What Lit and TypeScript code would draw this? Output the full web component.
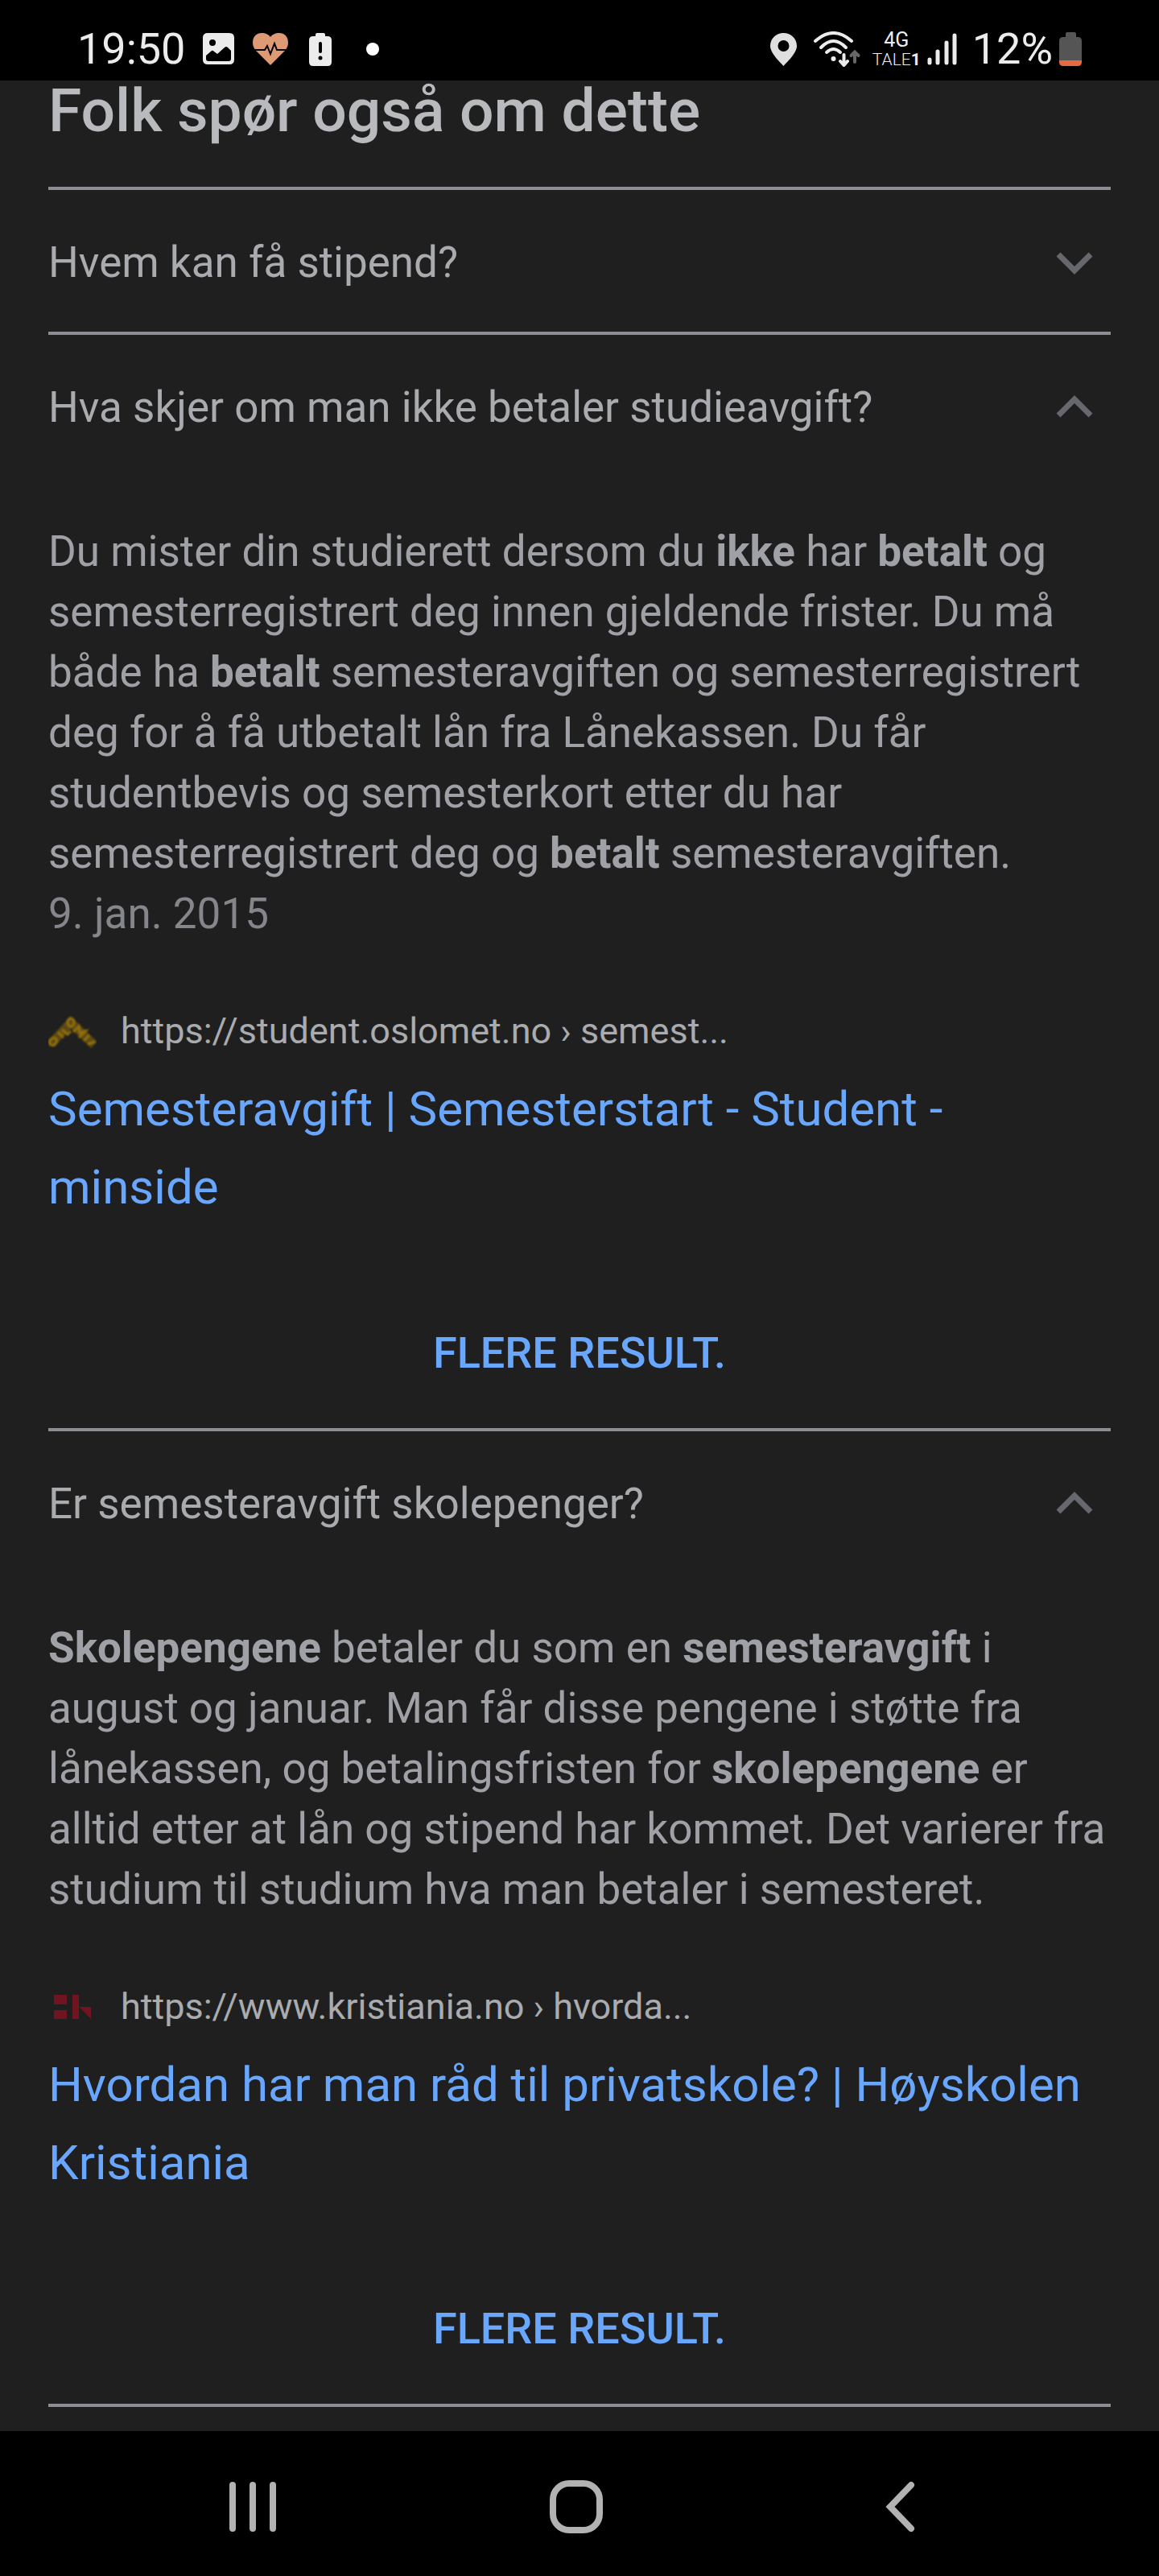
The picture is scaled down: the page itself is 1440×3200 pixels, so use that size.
import { LitElement, html, css } from "lit";
import { customElement, property, state } from "lit/decorators.js";

interface Source {
  icon: unknown;
  url: string;
  title: string;
}

interface Question {
  id: string;
  title: string;
  open: boolean;
  answer?: unknown;
  date?: string;
  source?: Source;
}

const oslometIcon = html`<svg class="favicon" viewBox="0 0 60 60" aria-hidden="true">
  <defs><filter id="soft"><feGaussianBlur stdDeviation="1" /></filter></defs>
  <g filter="url(#soft)" fill="none">
    <path stroke="#5c4812" stroke-width="11" d="M3 46L28 19L57 47" />
    <g stroke="#92700f" stroke-width="3">
      <ellipse cx="6" cy="43" rx="5" ry="4" transform="rotate(-45 6 43)" />
      <path d="M12 31L19 38M17 28L24 34L28 30" />
      <ellipse cx="28" cy="19" rx="4" ry="5" />
      <path d="M31 31L38 24L39 32L46 30L38 38M44 42L51 35M49 46L58 43" />
    </g>
  </g>
</svg>`;

const kristianiaIcon = html`<svg class="favicon" viewBox="0 0 60 60" aria-hidden="true">
  <g fill="#701420">
    <rect x="7" y="15" width="16" height="12" /><rect x="7" y="34" width="16" height="11" />
    <rect x="30" y="15" width="8" height="30" /><path d="M38 30H53V45Z" />
  </g>
</svg>`;

@customElement("status-bar")
class StatusBar extends LitElement {
  static styles = css`
    :host { display: block; background: #000; color: #ececec; font: 400 54px/64px Roboto, "Liberation Sans", sans-serif; }
    .bar { display: flex; align-items: center; justify-content: space-between; height: 100px; padding: 22px 96px 0; box-sizing: border-box; }
    .side { display: flex; align-items: center; }
    .left { gap: 22px; }
    .right { gap: 8px; }
    svg { display: block; flex: none; }
    .carrier { display: flex; flex-direction: column; align-items: center; padding-top: 2px; font-size: 25px; line-height: 24px; }
    .sub { font-size: 21px; font-weight: 300; }
    .sub b { font-weight: 700; }
  `;

  render() {
    return html`<div class="bar">
      <div class="side left">
        <span>19:50</span>
        <svg width="40" height="40" viewBox="0 0 40 40" role="img" aria-label="Bilde">
          <path fill="#ececec" fill-rule="evenodd" d="M6 0H33Q39 0 39 6V33Q39 39 33 39H6Q0 39 0 33V6Q0 0 6 0ZM12 8A4 4 0 1 0 12 16A4 4 0 1 0 12 8ZM4 28L11 22Q12 21 14 23L18 26L27 18Q29 16 31 18L35 22V32Q35 35 32 35H7Q4 35 4 32Z" />
        </svg>
        <svg width="44" height="40" viewBox="0 0 44 40" role="img" aria-label="Helse">
          <path fill="#dd9a75" d="M22 40L4 22Q0 17 0 12C0 4 5 0 11 0C16 0 20 2 22 5C24 2 28 0 33 0C39 0 44 4 44 12Q44 17 40 22Z" />
          <path fill="none" stroke="#000" stroke-width="2" d="M0 21H15L18 16L22 26L27 13L30 21H44" />
        </svg>
        <svg width="36" height="41" viewBox="-4 0 36 41" role="img" aria-label="Batteri">
          <path fill="#ececec" d="M8 4V2Q8 0 10 0H18Q20 0 20 2V4H23Q28 4 28 9V36Q28 41 23 41H5Q0 41 0 36V9Q0 4 5 4Z" />
          <path stroke="#000" stroke-width="4" stroke-linecap="round" d="M14 13V23" /><circle cx="14" cy="31" r="2.5" />
        </svg>
        <svg width="36" height="16" viewBox="0 0 36 16" role="img" aria-label="Flere varsler"><circle cx="25" cy="8" r="8" fill="#fff" /></svg>
      </div>
      <div class="side right">
        <svg width="46" height="41" viewBox="0 0 46 41" role="img" aria-label="Posisjon">
          <path fill="#dfdfdf" fill-rule="evenodd" d="M16.5 41C12 36 0 25 0 16C0 7 7 0 16.5 0S33 7 33 16C33 25 21 36 16.5 41ZM16.5 9A7 7 0 1 0 16.5 23A7 7 0 1 0 16.5 9Z" />
        </svg>
        <svg width="65" height="44" viewBox="0 0 65 44" role="img" aria-label="Wi-Fi">
          <g fill="none" stroke="#ececec" stroke-width="4" stroke-linecap="round">
            <path d="M2 12Q24.5 -8 47 12" /><path d="M9 20Q24.5 4 40 20" /><path d="M16 26Q24.5 18 33 26" />
            <path d="M37.5 29V41M33 37L37.5 42L42 37" />
            <path stroke="#666" d="M51 38V26M46.500 30L51 25.500L55.500 30" />
          </g>
          <circle cx="24.5" cy="34" r="3" fill="#ececec" />
        </svg>
        <span class="carrier"><span>4G</span><span class="sub">TALE<b>1</b></span></span>
        <svg width="48" height="40" viewBox="2 0 48 40" role="img" aria-label="Signal">
          <path stroke="#ececec" stroke-width="5" stroke-linecap="round" d="M5 33V37M15 23V37M26 12V37M36 3V37" />
        </svg>
        <span>12%</span>
        <svg width="28" height="43" viewBox="0 0 28 43" role="img" aria-label="Batterinivå">
          <path fill="#555" d="M8 6V2Q8 0 10 0H19Q21 0 21 2V6H23Q28 6 28 11V35H0V11Q0 6 5 6Z" />
          <path fill="#e8693f" d="M0 35H28V37Q28 42 23 42H5Q0 42 0 37Z" />
        </svg>
      </div>
    </div>`;
  }
}

@customElement("question-item")
class QuestionItem extends LitElement {
  @property({ attribute: false }) item!: Question;
  @state() private open = false;

  static styles = css`
    :host { display: block; border-top: 4px solid #8e8d93; color: #a9abae; font: 400 53px/75px Roboto, "Liberation Sans", sans-serif; }
    h3, p { margin: 0; font: inherit; }
    a { color: #69a7ff; text-decoration: none; }
    .toggle { display: flex; align-items: center; justify-content: space-between; width: 100%; height: 176px; padding: 4px 22px 0 0; border: 0; background: none; color: inherit; font: inherit; text-align: left; }
    .chevron { width: 46px; height: 46px; flex: none; fill: none; stroke: #66686d; stroke-width: 7; }
    .body { display: flex; flex-direction: column; padding-top: 56px; }
    .answer { color: #a0a1a6; }
    .answer b { font-weight: 700; }
    .date { color: #85868b; }
    .source { display: flex; align-items: center; gap: 30px; margin: 74px 0 14px; padding: 4px 0; color: #a9abae; font-size: 45px; line-height: 60px; }
    .favicon { width: 60px; height: 60px; flex: none; }
    .title { font-size: 60px; line-height: 97px; }
    .more { align-self: center; margin: 120px 0 56px; font-size: 54px; font-weight: 500; }
  `;

  willUpdate(changed: Map<string, unknown>) {
    if (changed.has("item")) this.open = this.item.open;
  }

  render() {
    const q = this.item;
    return html`<h3>
        <button class="toggle" aria-expanded=${this.open} @click=${() => (this.open = !this.open)}>
          <span>${q.title}</span>
          <svg class="chevron" viewBox="0 0 46 46" aria-hidden="true">
            <path d=${this.open ? "M3 33L23 13L43 33" : "M3 13L23 33L43 13"} />
          </svg>
        </button>
      </h3>
      ${this.open && q.source
        ? html`<div class="body">
            <p class="answer">${q.answer}</p>
            ${q.date ? html`<p class="date">${q.date}</p>` : ""}
            <div class="source">${q.source.icon}<span>${q.source.url}</span></div>
            <a class="title" href="#${q.id}">${q.source.title}</a>
            <a class="more" href="#flere-${q.id}">FLERE RESULT.</a>
          </div>`
        : ""}`;
  }
}

@customElement("nav-bar")
class NavBar extends LitElement {
  static styles = css`
    :host { display: block; background: #000; }
    nav { display: flex; justify-content: space-between; align-items: center; box-sizing: border-box; height: 180px; padding: 8px 284px 0 274px; }
    button { display: block; padding: 0; border: 0; background: none; }
    svg { display: block; width: 80px; height: 80px; fill: none; stroke: #b2b2b2; stroke-width: 8; stroke-linecap: round; }
  `;

  render() {
    return html`<nav aria-label="System">
      <button aria-label="Nylige apper"><svg viewBox="0 0 80 80"><path d="M15 13V67M40 13V67M65 13V67" /></svg></button>
      <button aria-label="Hjem"><svg viewBox="0 0 80 80"><rect x="12" y="11" width="58" height="58" rx="20" /></svg></button>
      <button aria-label="Tilbake"><svg viewBox="0 0 80 80"><path d="M56 13L30 40L56 67" /></svg></button>
    </nav>`;
  }
}

@customElement("app-root")
class AppRoot extends LitElement {
  private questions: Question[] = [
    { id: "stipend", title: "Hvem kan få stipend?", open: false },
    {
      id: "studieavgift",
      title: "Hva skjer om man ikke betaler studieavgift?",
      open: true,
      answer: html`Du mister din studierett dersom du <b>ikke</b> har <b>betalt</b> og semesterregistrert deg innen gjeldende frister. Du må både ha <b>betalt</b> semesteravgiften og semesterregistrert deg for å få utbetalt lån fra Lånekassen. Du får studentbevis og semesterkort etter du har semesterregistrert deg og <b>betalt</b> semesteravgiften.`,
      date: "9. jan. 2015",
      source: { icon: oslometIcon, url: "https://student.oslomet.no › semest...", title: "Semesteravgift | Semesterstart - Student - minside" },
    },
    {
      id: "skolepenger",
      title: "Er semesteravgift skolepenger?",
      open: true,
      answer: html`<b>Skolepengene</b> betaler du som en <b>semesteravgift</b> i august og januar. Man får disse pengene i støtte fra lånekassen, og betalingsfristen for <b>skolepengene</b> er alltid etter at lån og stipend har kommet. Det varierer fra studium til studium hva man betaler i semesteret.`,
      source: { icon: kristianiaIcon, url: "https://www.kristiania.no › hvorda...", title: "Hvordan har man råd til privatskole? | Høyskolen Kristiania" },
    },
  ];

  static styles = css`
    :host { display: block; background: #1f1f1f; }
    main { padding: 0 60px; }
    h2 { margin: 0; padding-bottom: 58px; color: #b9babe; font: 500 75px/74px Roboto, "Liberation Sans", sans-serif; }
    .end { height: 30px; border-top: 4px solid #8e8d93; }
  `;

  render() {
    return html`<status-bar></status-bar>
      <main>
        <h2>Folk spør også om dette</h2>
        ${this.questions.map((q) => html`<question-item .item=${q}></question-item>`)}
        <div class="end"></div>
      </main>
      <nav-bar></nav-bar>`;
  }
}
